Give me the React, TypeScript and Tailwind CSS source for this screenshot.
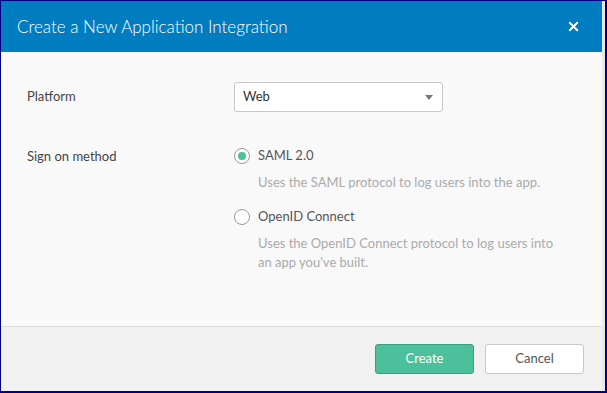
import { X } from "lucide-react";

function Radio({ checked }: { checked?: boolean }) {
  return (
    <span className="w-4 h-4 rounded-full border border-[#9a9a9a] bg-white flex items-center justify-center shrink-0">
      {checked && <span className="w-2 h-2 rounded-full bg-[#4cbf9b]" />}
    </span>
  );
}

function Option({ label, desc, checked }: { label: string; desc: string; checked?: boolean }) {
  return (
    <div>
      <div className="flex items-center gap-2 h-4">
        <Radio checked={checked} />
        <span className="text-[13px] text-[#555]">{label}</span>
      </div>
      <p className="pl-6 mt-[9px] text-[13px] leading-[19px] text-[#aaa] w-[320px]">{desc}</p>
    </div>
  );
}

export default function App() {
  return (
    <div
      className="w-[607px] h-[393px] border-l border-t border-r-2 border-b-2 border-[#000080] flex bg-[#f1f1f1]"
      style={{ fontFamily: "Lato, 'Open Sans', sans-serif" }}
    >
      <div className="flex-1 flex flex-col">
        <div className="h-[51px] bg-[#007cc0] flex items-center justify-between pl-4 pr-[21px]">
          <h1 className="text-white text-[17px] font-light">Create a New Application Integration</h1>
          <X className="w-[15px] h-[15px] text-white" strokeWidth={3} />
        </div>
        <div className="h-[275px] bg-[#f9f9f9] border-b border-[#dcdcdc] pt-[30px] pl-[26px]">
          <div className="flex items-center">
            <span className="w-[207px] text-[13px] text-[#444]">Platform</span>
            <div className="w-[209px] h-[30px] bg-white border border-[#c8c8c8] rounded-[3px] flex items-center justify-between pl-2 pr-[9px]">
              <span className="text-[13px] text-[#333]">Web</span>
              <span className="w-0 h-0 border-l-[4px] border-r-[4px] border-t-[5px] border-l-transparent border-r-transparent border-t-[#777]" />
            </div>
          </div>
          <div className="flex mt-[36px]">
            <span className="w-[207px] text-[13px] text-[#444] leading-4">Sign on method</span>
            <div className="flex flex-col gap-[17px]">
              <Option checked label="SAML 2.0" desc="Uses the SAML protocol to log users into the app." />
              <Option label="OpenID Connect" desc="Uses the OpenID Connect protocol to log users into an app you've built." />
            </div>
          </div>
        </div>
        <div className="flex-1 flex items-center justify-end gap-[11px] pr-[18px]">
          <button className="w-[99px] h-[30px] rounded-[3px] bg-[#4cbf9b] border border-[#3d9f80] text-white text-[13px]">Create</button>
          <button className="w-[99px] h-[30px] rounded-[3px] bg-white border border-[#c8c8c8] text-[#555] text-[13px]">Cancel</button>
        </div>
      </div>
      <div className="w-[3px] bg-[#e8e8e8]" />
    </div>
  );
}
